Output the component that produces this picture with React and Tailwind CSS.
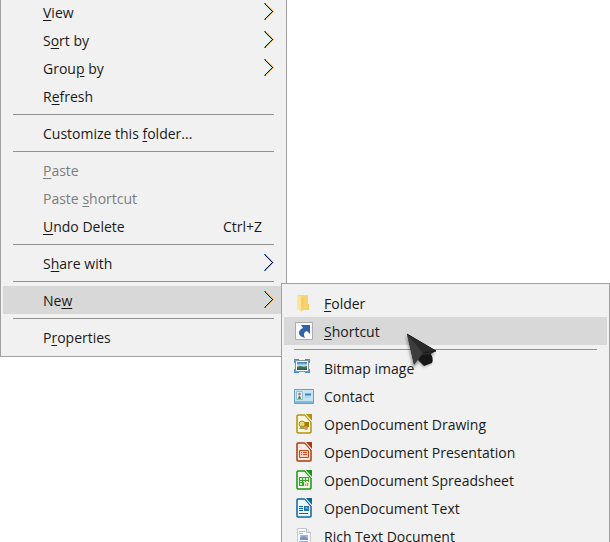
import React from "react";

const chevronRows = Array.from({ length: 17 }, (_, y) => ({
  x: Math.min(y, 16 - y),
  y,
}));

// Arrow shown on rows that open a submenu, with subpixel colour fringes
const Chevron = () => (
  <svg
    className="h-[18px] w-[10px]"
    viewBox="0 0 10 18"
    shapeRendering="crispEdges"
    aria-hidden="true"
  >
    {chevronRows.map(({ x, y }) => (
      <g key={y}>
        <rect x={x - 1} y={y} width="1" height="1" fill="#b5f1fa" />
        <rect x={x} y={y} width="1" height="1" fill="#00104a" />
        <rect x={x + 1} y={y} width="1" height="1" fill="#e9a35a" />
      </g>
    ))}
    <path d="M0 0h2v1H0zM0 16h2v1H0z" fill="#2a7fc4" />
  </svg>
);

const FolderIcon = () => (
  <svg className="h-5 w-5" viewBox="0 0 20 20" aria-hidden="true">
    <path d="M3 2h11v14H3z" fill="#f6d678" />
    <path d="M12 11h3v6h-4z" fill="#f2ca61" />
    <path d="M3 2l5 2v15l-5-3z" fill="#fde596" />
    <path d="M8 4v14" stroke="#e6bc55" strokeWidth="1" />
    <path d="M9 3h5v14H9z" fill="#f8d36d" />
  </svg>
);

const ShortcutIcon = () => (
  <svg className="h-5 w-5" viewBox="0 0 20 20" aria-hidden="true">
    <path d="M1.500 1.500h17v17h-17z" fill="#fafafa" stroke="#a9adb2" />
    <path
      d="M7 4h9v9l-3-3c-3 1-4 3-2 7-4-1-6-3-6-5 0-3 2-4 4-5z"
      fill="#2f62a8"
    />
  </svg>
);

const BitmapIcon = () => (
  <svg className="h-5 w-5" viewBox="0 0 20 20" aria-hidden="true">
    <defs>
      <linearGradient id="sky" x1="0" y1="0" x2="0" y2="1">
        <stop offset="0" stopColor="#2f78bd" />
        <stop offset=".5" stopColor="#d7edf4" />
        <stop offset=".65" stopColor="#407a5c" />
        <stop offset="1" stopColor="#244f6b" />
      </linearGradient>
    </defs>
    <path
      d="M0 1h5v4H0zM11 1h5v4h-5zM0 11h5v4H0zM11 11h5v4h-5z"
      fill="#3f8fce"
    />
    <path d="M1.500 2.500h13v11h-13z" fill="#fff" stroke="#8a9299" />
    <path d="M3 4h10v8H3z" fill="url(#sky)" />
    <path d="M3 9l3-1 4 1 3-1v1L8 11z" fill="#3c7852" />
  </svg>
);

const ContactIcon = () => (
  <svg className="h-5 w-5" viewBox="0 0 20 20" aria-hidden="true">
    <path d="M.500 3.500h19v14H.500z" fill="#c5e4f3" stroke="#64a3c4" />
    <path d="M1 15h18v2H1z" fill="#85bad5" />
    <path d="M2.500 5.500h6v8h-6z" fill="#e3eff5" stroke="#94bdd1" />
    <circle cx="5.500" cy="8" r="1.500" fill="#b08b6c" />
    <path d="M4 13c0-4 3-4 3 0z" fill="#55836a" />
    <path d="M11 8.500h6" stroke="#3f83b8" strokeWidth="2" />
    <path d="M11 11h5" stroke="#9fcbe0" strokeWidth="1" />
  </svg>
);

// OpenDocument page with a folded corner, tinted for each file type
const DocumentIcon = ({ color, paper, children }) => (
  <svg className="h-5 w-5" viewBox="-1 0 20 20" aria-hidden="true">
    <path
      d="M3 1h7l6 7v10a1 1 0 0 1-1 1H3a1 1 0 0 1-1-1V2a1 1 0 0 1 1-1z"
      fill={paper}
      stroke={color}
      strokeWidth="1.500"
      strokeLinejoin="round"
    />
    <path d="M11 0h6v7z" fill={color} />
    <path d="M10 0l7 8" stroke="#f4f4f4" strokeWidth="1" />
    {children}
  </svg>
);

const DrawingIcon = () => (
  <DocumentIcon color="#b3930c" paper="#fbf6df">
    <path d="M9 8h5v5H9z" fill="#9c7d08" />
    <circle cx="7" cy="10" r="3" fill="#f0d774" stroke="#ba930d" />
    <path d="M4 15l3-4 3 4z" fill="#85a85b" />
    <circle cx="11" cy="14" r="2" fill="#e38b55" />
  </DocumentIcon>
);

const PresentationIcon = () => (
  <DocumentIcon color="#a83b14" paper="#fbe9e0">
    <path d="M4.500 8.500h9v7h-9z" fill="#f8cfb8" stroke="#b84d25" />
    <path
      d="M6 10.500h1m1 0h4M6 12.500h1m1 0h4"
      stroke="#b84d25"
      strokeWidth="1"
    />
  </DocumentIcon>
);

const SpreadsheetIcon = () => (
  <DocumentIcon color="#1b9412" paper="#effbed">
    <path d="M4 7h10v9H4z" fill="#35a52c" />
    <path
      d="M5 8h2v2H5zM8 8h2v2H8zM11 8h2v2h-2zM5 11h2v1H5zM8 11h2v1H8zM11 11h2v1h-2zM5 13h2v2H5z"
      fill="#dff6db"
    />
    <path d="M9 12h5v4H9z" fill="#f1ded3" />
    <path d="M10 14h1v2h-1zM12 13h1v3h-1z" fill="#cf8464" />
  </DocumentIcon>
);

const TextIcon = () => (
  <DocumentIcon color="#0c659c" paper="#ecf7fc">
    <path
      d="M4 8.500h4M4 10.500h4M4 12.500h4M4 15.500h9"
      stroke="#0c659c"
      strokeWidth="1"
    />
    <path d="M9 8h5v5H9z" fill="#2875a5" />
    <path d="M10 10l2-1 1 2z" fill="#a9d2e6" />
  </DocumentIcon>
);

const RichTextIcon = () => (
  <svg className="h-5 w-5" viewBox="0 0 20 20" aria-hidden="true">
    <path d="M3.500 2.500h9l4 4v13h-13z" fill="#fafbfd" stroke="#c3c8d0" />
    <path d="M12.500 2.500v4h4" fill="#e5e9ef" stroke="#b7c0cb" />
    <path d="M5 5.500h6M5 7.500h4" stroke="#a9b9d6" strokeWidth="1" />
    <path d="M6 9h8v5H6z" fill="#7fc3d6" />
    <path d="M6 12l4-2 4 3v1H6z" fill="#9186c0" />
    <path d="M5 15.500h9M5 17.500h9" stroke="#9eb5d0" strokeWidth="1" />
  </svg>
);

const Cursor = () => (
  <svg
    className="pointer-events-none absolute top-[332px] left-[404px] h-10 w-9"
    viewBox="0 0 36 40"
    aria-hidden="true"
  >
    <defs>
      <filter id="soft" x="-30%" y="-30%" width="160%" height="160%">
        <feGaussianBlur stdDeviation="1.500" />
      </filter>
    </defs>
    <path
      d="M2 4l7 32 6-6 4 5 8-3v-8l4-3z"
      fill="#000"
      opacity=".35"
      filter="url(#soft)"
    />
    <path d="M17 22l9-1q4 5 2 10l-8 3-6-6z" fill="#161616" />
    <path d="M3 2l29 17-5 3-9 1-8 9z" fill="#2a2a2a" />
    <path d="M3 2l16 19-9 12z" fill="#3c3c3c" />
    <path d="M3 2l29 17-13 2" fill="none" stroke="#191919" strokeWidth="1" />
  </svg>
);

// The text between brackets is the underlined access key
const Label = ({ text }) => {
  const [before, rest = ""] = text.split("[");
  const [key, after] = rest.split("]");

  return (
    <span className="pt-0.5 whitespace-pre">
      {before}
      {key && <u className="underline-offset-2">{key}</u>}
      {after}
    </span>
  );
};

const Separator = () => (
  <div role="separator" className="mx-2.5 my-1 h-px bg-[#919191]" />
);

const mainItems = [
  { text: "[V]iew", submenu: true },
  { text: "S[o]rt by", submenu: true },
  { text: "Grou[p] by", submenu: true },
  { text: "R[e]fresh" },
  null,
  { text: "Customize this [f]older..." },
  null,
  { text: "[P]aste", disabled: true },
  { text: "Paste [s]hortcut", disabled: true },
  { text: "[U]ndo Delete", shortcut: "Ctrl+Z" },
  null,
  { text: "S[h]are with", submenu: true },
  null,
  { text: "Ne[w]", submenu: true, active: true },
  null,
  { text: "P[r]operties" },
];

const newItems = [
  { text: "[F]older", icon: FolderIcon },
  { text: "[S]hortcut", icon: ShortcutIcon, active: true },
  null,
  { text: "Bitmap image", icon: BitmapIcon },
  { text: "Contact", icon: ContactIcon },
  { text: "OpenDocument Drawing", icon: DrawingIcon },
  { text: "OpenDocument Presentation", icon: PresentationIcon },
  { text: "OpenDocument Spreadsheet", icon: SpreadsheetIcon },
  { text: "OpenDocument Text", icon: TextIcon },
  { text: "Rich Text Document", icon: RichTextIcon },
];

const MainMenu = () => (
  <div
    role="menu"
    className="-mt-2 w-[287px] border border-[#a0a0a0] bg-[#f1f1f1] px-0.5 py-[5px]"
  >
    {mainItems.map((item, idx) =>
      item ? (
        <button
          key={idx}
          type="button"
          role="menuitem"
          disabled={item.disabled}
          aria-haspopup={item.submenu ? "menu" : undefined}
          className={`flex h-7 w-full items-center justify-between pr-2.5 pl-10 text-left disabled:text-[#7d7d7d] ${
            item.active ? "bg-[#d8d8d8]" : ""
          }`}
        >
          <Label text={item.text} />
          {item.shortcut && (
            <span className="pt-0.5 pr-3">{item.shortcut}</span>
          )}
          {item.submenu && <Chevron />}
        </button>
      ) : (
        <Separator key={idx} />
      )
    )}
  </div>
);

const NewMenu = () => (
  <div
    role="menu"
    aria-label="New"
    className="absolute top-[283px] right-0 left-[281px] border border-[#a0a0a0] bg-[#f1f1f1] px-0.5 py-[5px]"
  >
    {newItems.map((item, idx) =>
      item ? (
        <button
          key={idx}
          type="button"
          role="menuitem"
          className={`flex h-7 w-full items-center gap-2.5 pl-2.5 text-left ${
            item.active ? "bg-[#d8d8d8]" : ""
          }`}
        >
          <item.icon />
          <Label text={item.text} />
        </button>
      ) : (
        <Separator key={idx} />
      )
    )}
  </div>
);

export default function App() {
  return (
    <main className="relative h-screen overflow-hidden bg-white font-['Open_Sans','Noto_Sans',sans-serif] text-[14px] leading-5 text-[#1a1a1a]">
      <MainMenu />
      <NewMenu />
      <Cursor />
    </main>
  );
}
